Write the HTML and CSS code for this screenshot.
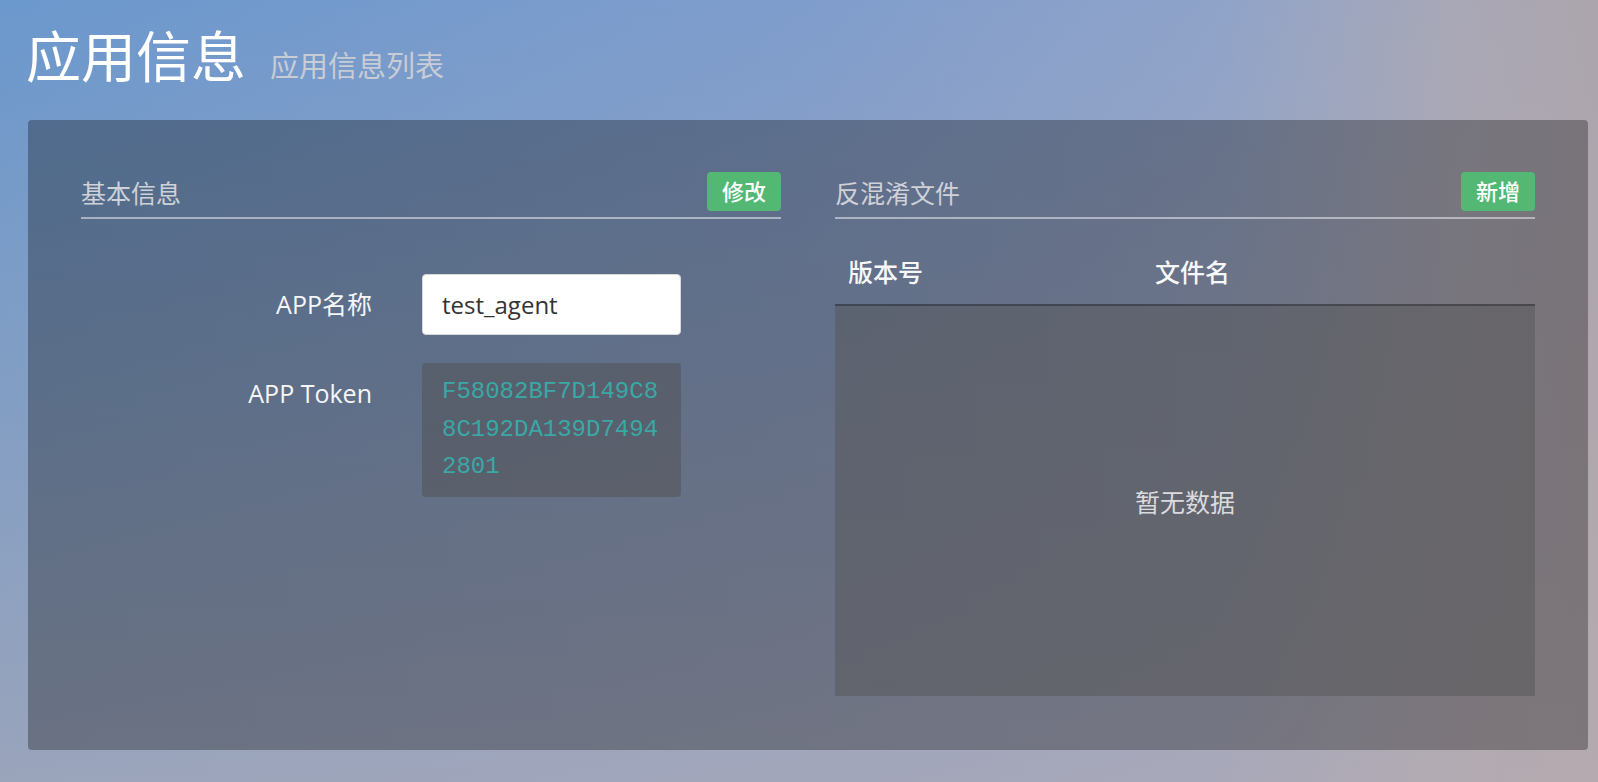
FILE: index.html
```html
<!DOCTYPE html>
<html lang="zh-CN">
<head>
<meta charset="utf-8">
<title>应用信息</title>
<link rel="stylesheet" href="styles.css">
</head>
<body>
<header class="page-header">
  <h1 class="page-title">应用信息</h1>
  <span class="page-subtitle">应用信息列表</span>
</header>
<main class="panel">
  <section class="col">
    <div class="sec-head">
      <span class="sec-title">基本信息</span>
      <button class="btn-green">修改</button>
    </div>
    <div class="form">
      <label class="f-label">APP名称</label>
      <div class="f-input">test_agent</div>
      <label class="f-label">APP Token</label>
      <div class="f-token">F58082BF7D149C88C192DA139D74942801</div>
    </div>
  </section>
  <section class="col">
    <div class="sec-head">
      <span class="sec-title">反混淆文件</span>
      <button class="btn-green">新增</button>
    </div>
    <div class="table">
      <div class="t-head">
        <div class="th th-ver">版本号</div>
        <div class="th">文件名</div>
      </div>
      <div class="t-body">暂无数据</div>
    </div>
  </section>
</main>
</body>
</html>
```
FILE: styles.css
```css
html, body {
  margin: 0;
  padding: 0;
  height: 100%;
}
body {
  font-family: "Open Sans", "Noto Sans CJK SC", sans-serif;
  overflow: hidden;
  background:
    linear-gradient(to bottom, rgba(185,172,175,0) 0%, rgba(185,172,175,0.6) 100%),
    linear-gradient(to right, #6b98cd 0%, #7f9dcc 50%, #8fa3c9 76%, #a9a8b6 91%, #aca5ad 100%);
}
.page-header {
  display: flex;
  align-items: baseline;
  padding: 28px 26px 35px;
}
.page-title {
  margin: 0;
  font-size: 55px;
  line-height: 55px;
  font-weight: normal;
  color: #ffffff;
}
.page-subtitle {
  margin-left: 24px;
  font-size: 29px;
  color: #c8ccd5;
}
.panel {
  box-sizing: border-box;
  width: 1560px;
  margin-left: 28px;
  padding: 52px 53px 54px;
  border-radius: 4px;
  background: rgba(0,0,0,0.3);
  display: grid;
  grid-template-columns: 700px 700px;
  column-gap: 54px;
  align-items: start;
}
.sec-head {
  display: flex;
  align-items: center;
  justify-content: space-between;
  padding-bottom: 6px;
  border-bottom: 2px solid rgba(225,225,232,0.6);
}
.sec-title {
  font-size: 25px;
  color: #cfd2d8;
}
.btn-green {
  height: 39px;
  padding: 0 15px;
  border: none;
  border-radius: 4px;
  background: #52b874;
  color: #ffffff;
  font-family: "Open Sans", "Noto Sans CJK SC", sans-serif;
  font-size: 22px;
  font-weight: 500;
  line-height: 39px;
}
.form {
  margin-top: 55px;
  display: grid;
  grid-template-columns: 291px 259px;
  column-gap: 50px;
  row-gap: 28px;
  align-items: start;
}
.f-label {
  text-align: right;
  font-size: 25px;
  line-height: 61px;
  color: #f6f6f6;
}
.f-input {
  box-sizing: border-box;
  height: 61px;
  padding: 0 19px;
  border: 1px solid #d8d8d8;
  border-radius: 4px;
  background: #ffffff;
  color: #333333;
  font-size: 24px;
  line-height: 59px;
}
.f-token {
  box-sizing: border-box;
  padding: 10px 19px 11px 20px;
  border-radius: 4px;
  background: rgba(82,82,86,0.55);
  color: #3aa8a5;
  font-family: "Liberation Mono", monospace;
  font-size: 24px;
  line-height: 37.5px;
  word-break: break-all;
}
.table {
  margin-top: 21px;
}
.t-head {
  display: grid;
  grid-template-columns: 320px 1fr;
  height: 64px;
  border-bottom: 2px solid rgba(35,35,40,0.55);
}
.th {
  font-size: 25px;
  font-weight: 500;
  line-height: 64px;
  color: #f7f7f7;
}
.th-ver {
  padding-left: 13px;
}
.t-body {
  height: 390px;
  display: flex;
  align-items: center;
  justify-content: center;
  background: rgba(85,85,88,0.5);
  font-size: 25px;
  color: #dadbdf;
}
```
